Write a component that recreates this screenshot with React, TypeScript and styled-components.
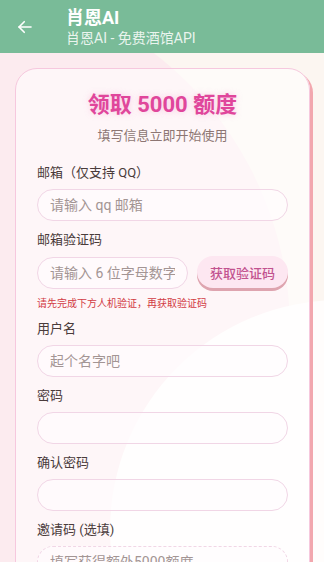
import styled, { createGlobalStyle } from 'styled-components';

const GlobalStyle = createGlobalStyle`
  html, body {
    margin: 0;
    padding: 0;
    background: #fcf6f1;
  }
  body {
    font-family: Roboto, "Noto Sans CJK SC", sans-serif;
  }
  * { box-sizing: border-box; }
`;

const Page = styled.div`
  position: relative;
  width: 324px;
  height: 562px;
  overflow: hidden;
  background: #fcf6f1;
`;

const Blob = styled.div<{ $tone: 'pink' | 'white' }>`
  position: absolute;
  border-radius: 50%;
  pointer-events: none;
  ${p => p.$tone === 'pink'
    ? `left: -410px; top: -20px; width: 700px; height: 700px; background: #fcebef;`
    : `left: 110px; top: 300px; width: 460px; height: 460px; background: #fffdfc;`}
`;

const Header = styled.header`
  position: relative;
  z-index: 1;
  height: 53px;
  background: #79bb98;
  display: flex;
  align-items: center;
  padding-left: 16px;
  gap: 32px;
  color: #fff;
`;

const Titles = styled.div`
  display: flex;
  flex-direction: column;
`;

const AppTitle = styled.div`
  font-size: 18px;
  font-weight: 700;
  line-height: 22px;
`;

const AppSub = styled.div`
  font-size: 14px;
  line-height: 18px;
  color: rgba(255, 255, 255, 0.85);
`;

const Card = styled.main`
  position: relative;
  z-index: 1;
  margin: 15px 14px 0 15px;
  border: 1.5px solid #f6c8de;
  border-radius: 22px;
  background: rgba(255, 255, 255, 0.55);
  box-shadow: 3px 3px 0 #f2a7ae;
  padding: 21px 21px 30px 21px;
`;

const Heading = styled.h1`
  margin: 0;
  text-align: center;
  font-size: 22px;
  line-height: 30px;
  font-weight: 700;
  color: #e0469b;
  text-shadow: 0 0 6px rgba(240, 120, 190, 0.35);
`;

const Sub = styled.p`
  margin: 7px 0 20px;
  text-align: center;
  font-size: 13px;
  line-height: 18px;
  color: #8d7673;
`;

const Field = styled.div`
  display: flex;
  flex-direction: column;
  margin-bottom: 11px;
`;

const Label = styled.label`
  font-size: 13px;
  line-height: 16px;
  color: #4a3b3b;
  margin-bottom: 8px;
`;

const Input = styled.input<{ $dashed?: boolean }>`
  width: 100%;
  height: 32px;
  border-radius: 16px;
  border: 1px ${p => (p.$dashed ? 'dashed' : 'solid')} #f1d6e6;
  background: rgba(255, 252, 253, 0.7);
  padding: 0 12px;
  font-family: Roboto, "Noto Sans CJK SC", sans-serif;
  font-size: 14px;
  color: #4a3b3b;
  outline: none;
  &::placeholder {
    color: #a39594;
  }
`;

const Row = styled.div`
  display: flex;
  align-items: center;
  gap: 9px;
`;

const CodeButton = styled.button`
  flex: 0 0 91px;
  height: 32px;
  border: none;
  border-radius: 16px;
  background: #fde7f1;
  box-shadow: 0 3px 0 #dea4af;
  color: #c2528f;
  font-family: Roboto, "Noto Sans CJK SC", sans-serif;
  font-size: 13px;
  font-weight: 500;
  margin-bottom: 2px;
`;

const Hint = styled.div`
  margin-top: 8px;
  font-size: 10px;
  line-height: 12px;
  color: #d23c45;
`;

const BackArrow = () => (
  <svg width="18" height="18" viewBox="0 0 24 24" fill="none" stroke="#fff" strokeWidth="2.2" strokeLinecap="round" strokeLinejoin="round">
    <path d="M20 12H4" />
    <path d="M11 5l-7 7 7 7" />
  </svg>
);

export default function App() {
  return (
    <>
      <GlobalStyle />
      <Page>
        <Blob $tone="pink" />
        <Blob $tone="white" />
        <Header>
          <BackArrow />
          <Titles>
            <AppTitle>肖恩AI</AppTitle>
            <AppSub>肖恩AI - 免费酒馆API</AppSub>
          </Titles>
        </Header>
        <Card>
          <Heading>领取 5000 额度</Heading>
          <Sub>填写信息立即开始使用</Sub>
          <Field>
            <Label>邮箱（仅支持 QQ）</Label>
            <Input placeholder="请输入 qq 邮箱" />
          </Field>
          <Field>
            <Label>邮箱验证码</Label>
            <Row>
              <Input placeholder="请输入 6 位字母数字" />
              <CodeButton>获取验证码</CodeButton>
            </Row>
            <Hint>请先完成下方人机验证，再获取验证码</Hint>
          </Field>
          <Field>
            <Label>用户名</Label>
            <Input placeholder="起个名字吧" />
          </Field>
          <Field>
            <Label>密码</Label>
            <Input type="password" />
          </Field>
          <Field>
            <Label>确认密码</Label>
            <Input type="password" />
          </Field>
          <Field>
            <Label>邀请码 (选填)</Label>
            <Input $dashed placeholder="填写获得额外5000额度" />
          </Field>
        </Card>
      </Page>
    </>
  );
}
